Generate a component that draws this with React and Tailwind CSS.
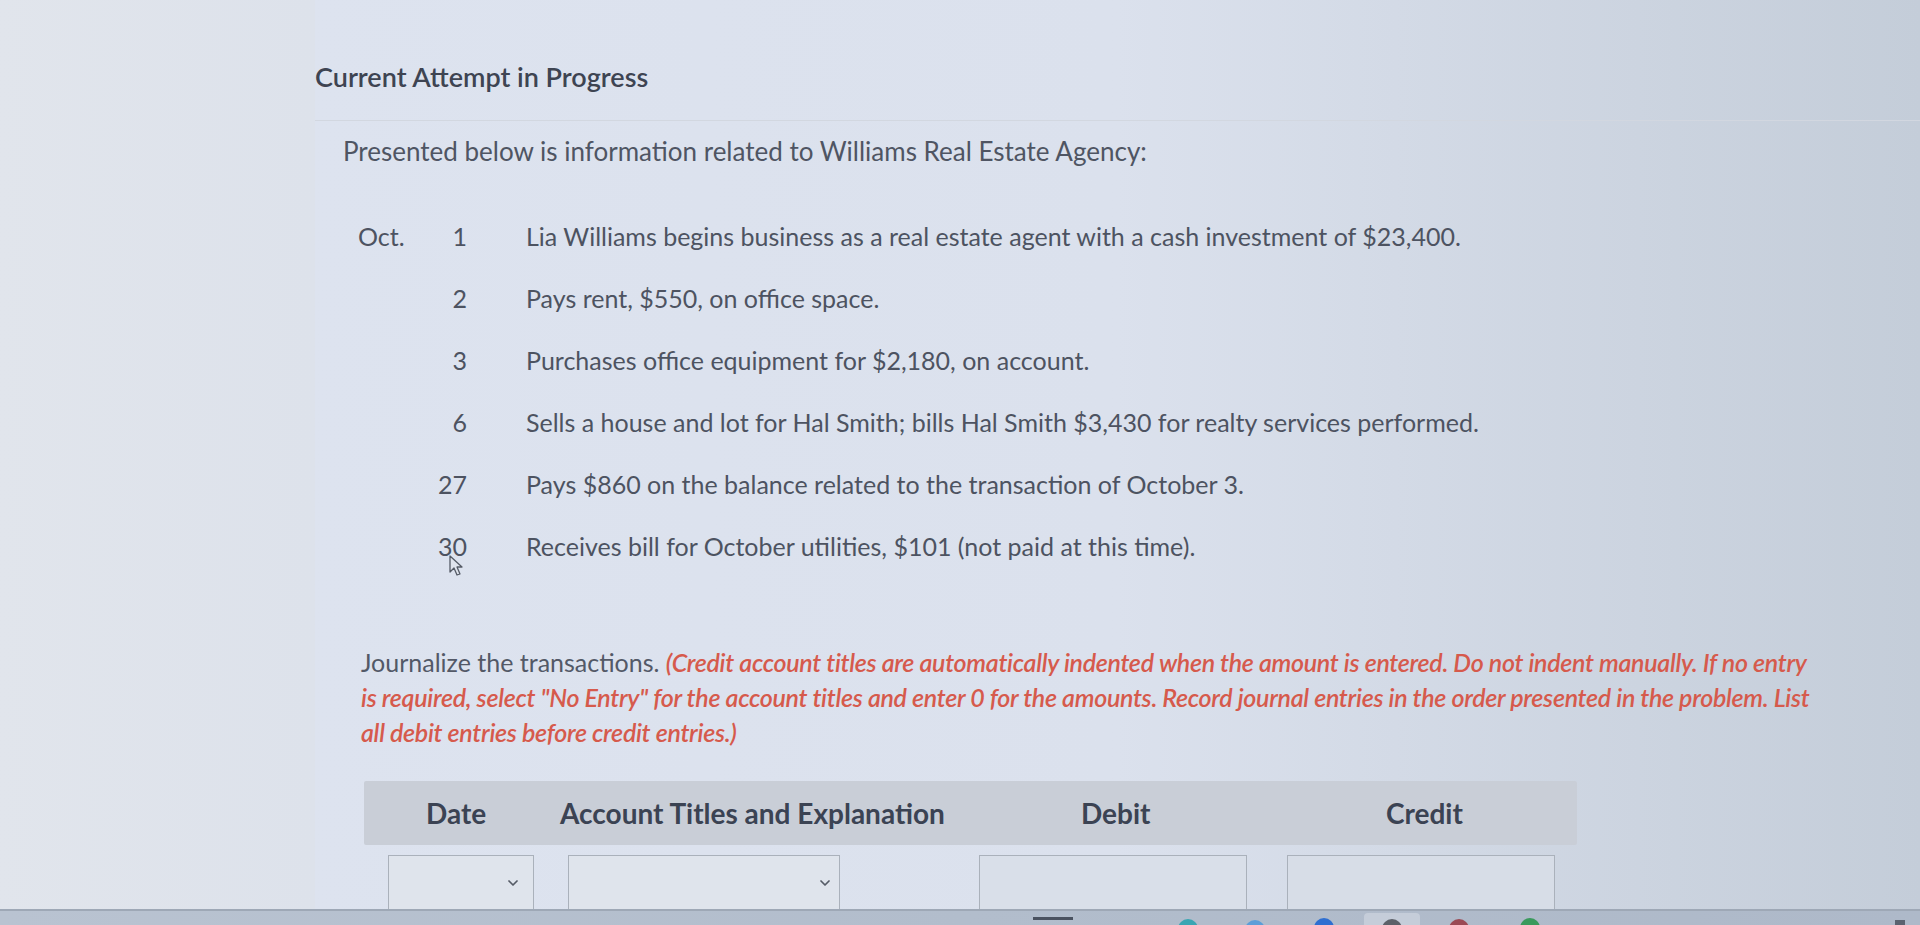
import React from "react";
import { ChevronDown } from "lucide-react";

const rows = [
  ["Oct.", "1", "Lia Williams begins business as a real estate agent with a cash investment of $23,400."],
  ["", "2", "Pays rent, $550, on office space."],
  ["", "3", "Purchases office equipment for $2,180, on account."],
  ["", "6", "Sells a house and lot for Hal Smith; bills Hal Smith $3,430 for realty services performed."],
  ["", "27", "Pays $860 on the balance related to the transaction of October 3."],
  ["", "30", "Receives bill for October utilities, $101 (not paid at this time)."],
];

export default function App() {
  return (
    <div className="relative w-full h-[925px] overflow-hidden flex flex-col font-['Lato','Noto_Sans',sans-serif] bg-linear-to-r from-[#e2e6ed] via-[#dce2ee] to-[#c6cfdb]">
      <div className="flex-1 flex overflow-hidden">
        <div className="w-[315px] shrink-0 bg-linear-to-r from-[#e1e5ec] to-[#dde2eb]" />
        <div className="flex-1 flex flex-col bg-linear-to-r from-[#dde3ef] via-[#dbe1ed] to-[#c4cdd9]">
          <div className="pt-[61px] pb-[27px] border-b border-[#d2d7e0]">
            <h1 className="text-[27px] leading-[32px] font-semibold text-[#3e4452] whitespace-nowrap">Current Attempt in Progress</h1>
          </div>
          <p className="mt-[14px] ml-[28px] text-[26px] leading-[32px] text-[#4f5563] whitespace-nowrap">
            Presented below is information related to Williams Real Estate Agency:
          </p>
          <div className="mt-[54px] ml-[43px] flex flex-col gap-[32px]">
            {rows.map(([m, d, t], i) => (
              <div key={i} className="flex h-[30px] items-center text-[25px] leading-[30px] text-[#4d5361] whitespace-nowrap">
                <span className="w-[60px]">{m}</span>
                <span className="w-[49px] text-right">{d}</span>
                <span className="ml-[59px]">{t}</span>
              </div>
            ))}
          </div>
          <p className="mt-[84px] ml-[46px] text-[25px] leading-[35px] text-[#535967] whitespace-nowrap">
            Journalize the transactions.{" "}
            <span className="italic font-semibold text-[#d65a4c] tracking-[-0.3px]">
              (Credit account titles are automatically indented when the amount is entered. Do not indent manually. If no entry
              <br />
              is required, select "No Entry" for the account titles and enter 0 for the amounts. Record journal entries in the order presented in the problem. List
              <br />
              all debit entries before credit entries.)
            </span>
          </p>
          <div className="mt-[31px] ml-[49px] w-[1213px]">
            <div className="h-[64px] bg-[#c9ced7] rounded-[2px] flex items-center text-[28px] font-bold text-[#3b4353] whitespace-nowrap">
              <span className="w-[196px] pl-[62px]">Date</span>
              <span className="w-[521px]">Account Titles and Explanation</span>
              <span className="w-[305px]">Debit</span>
              <span>Credit</span>
            </div>
            <div className="mt-[10px] flex">
              <div className="ml-[24px] w-[146px] h-[56px] border border-[#aab1bb] bg-[#dfe4ec] flex items-center justify-end pr-[12px]">
                <ChevronDown size={16} strokeWidth={2.6} className="text-[#555b66]" />
              </div>
              <div className="ml-[34px] w-[272px] h-[56px] border border-[#aab1bb] bg-[#dfe4ec] flex items-center justify-end pr-[6px]">
                <ChevronDown size={16} strokeWidth={2.6} className="text-[#555b66]" />
              </div>
              <div className="ml-[139px] w-[268px] h-[56px] border border-[#aab1bb] bg-[#d9dfe9]" />
              <div className="ml-[40px] w-[268px] h-[56px] border border-[#aab1bb] bg-[#d7dde7]" />
            </div>
          </div>
        </div>
      </div>
      <div className="h-[16px] shrink-0 border-t-2 border-[#9ea8b6] bg-linear-to-r from-[#b9c3d1] via-[#b2bdcc] to-[#aeb9c9] relative overflow-hidden">
        <div className="absolute left-[1033px] top-[6px] w-[40px] h-[3px] bg-[#4a5260]" />
        <div className="absolute left-[1178px] top-[8px] w-[20px] h-[20px] rounded-full bg-[#3aa6b3]" />
        <div className="absolute left-[1245px] top-[9px] w-[20px] h-[20px] rounded-full bg-[#5d9ed8]" />
        <div className="absolute left-[1314px] top-[7px] w-[20px] h-[20px] rounded-full bg-[#2f6fd1]" />
        <div className="absolute left-[1364px] top-[2px] w-[56px] h-[20px] rounded-t-[4px] bg-[#c5cdd9]" />
        <div className="absolute left-[1382px] top-[8px] w-[20px] h-[20px] rounded-full bg-[#5c6169]" />
        <div className="absolute left-[1449px] top-[8px] w-[20px] h-[20px] rounded-full bg-[#9b4a55]" />
        <div className="absolute left-[1520px] top-[7px] w-[20px] h-[20px] rounded-full bg-[#3a9a5c]" />
        <div className="absolute left-[1895px] top-[9px] w-[10px] h-[10px] bg-[#5a6270]" />
      </div>
      <svg className="absolute left-[449px] top-[555px]" width="16" height="22" viewBox="0 0 16 22">
        <path d="M1 1 L1 17 L5 13 L8 20 L11 19 L8 12 L13 12 Z" fill="#dfe4ed" stroke="#555b66" strokeWidth="1.3" strokeLinejoin="round" />
      </svg>
    </div>
  );
}
